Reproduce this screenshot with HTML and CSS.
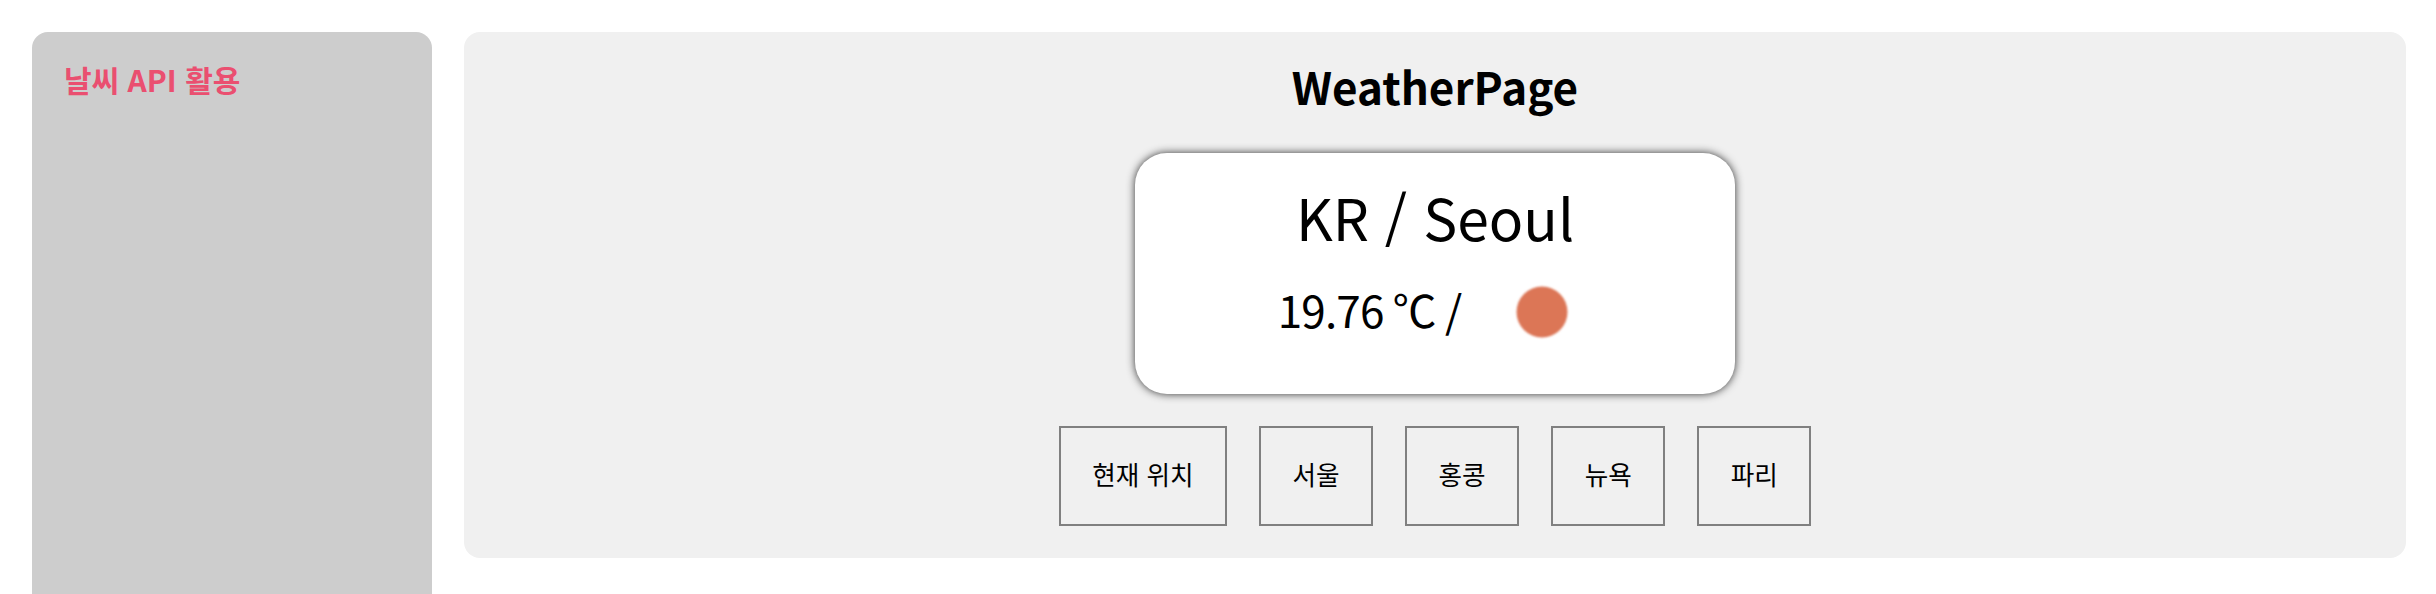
FILE: index.html
```html
<!DOCTYPE html>
<html lang="ko">

<head>
  <meta charset="utf-8">
  <title>WeatherPage</title>
  <link rel="stylesheet" href="styles.css">
</head>

<body>
  <div class="layout">
    <aside class="sidebar">
      <h3 class="sidebar-title">날씨 API 활용</h3>
    </aside>

    <main class="content">
      <h1 class="page-title">WeatherPage</h1>

      <section class="weather-card">
        <h2 class="city">KR / Seoul</h2>
        <div class="temp-row">
          <span class="temp">19.76 ℃ /</span>
          <svg class="weather-icon" viewBox="0 0 100 100" aria-label="weather icon">
            <defs>
              <filter id="soft"><feGaussianBlur stdDeviation="0.9"></feGaussianBlur></filter>
            </defs>
            <circle cx="50" cy="50" r="25.5" fill="#dc7656" filter="url(#soft)"></circle>
          </svg>
        </div>
      </section>

      <div class="city-buttons">
        <button class="city-button">현재 위치</button>
        <button class="city-button">서울</button>
        <button class="city-button">홍콩</button>
        <button class="city-button">뉴욕</button>
        <button class="city-button">파리</button>
      </div>
    </main>
  </div>
</body>

</html>
```

FILE: styles.css
```css
html,
body {
  height: 100%;
}

body {
  margin: 0;
  overflow: hidden;
  background: #fff;
  color: #000;
  font-family: "Noto Sans CJK KR", "Noto Sans", sans-serif;
}

.layout {
  display: flex;
  align-items: flex-start;
  gap: 32px;
  padding: 32px 30px 0 32px;
}

.sidebar {
  flex: 0 0 400px;
  box-sizing: border-box;
  height: 562px;
  padding: 30px 32px 0;
  border-radius: 16px 16px 0 0;
  background: #cdcdcd;
}

.sidebar-title {
  margin: 0;
  color: #ea4f70;
  font-size: 30px;
  line-height: 34px;
  font-weight: 700;
}

.content {
  flex: 1;
  box-sizing: border-box;
  height: 526px;
  padding-top: 26px;
  border-radius: 16px;
  background: #f0f0f0;
  display: flex;
  flex-direction: column;
  align-items: center;
}

.page-title {
  margin: 0 0 39px;
  font-size: 44px;
  line-height: 56px;
  font-weight: 700;
}

.weather-card {
  box-sizing: border-box;
  width: 600px;
  height: 241px;
  padding-top: 23px;
  border-radius: 32px;
  background: #fff;
  box-shadow: 0 0 8px #333;
  text-align: center;
}

.city {
  margin: 0 0 6px;
  font-size: 57px;
  line-height: 80px;
  font-weight: 400;
}

.temp-row {
  display: flex;
  justify-content: center;
  align-items: center;
  height: 100px;
}

.temp {
  margin-bottom: 6px;
  font-size: 44px;
  line-height: 60px;
  letter-spacing: -0.8px;
}

.weather-icon {
  width: 100px;
  height: 100px;
  margin-left: 31px;
}

.city-buttons {
  display: flex;
  gap: 32px;
  margin-top: 32px;
}

.city-button {
  box-sizing: border-box;
  height: 100px;
  padding: 0 31.5px 6px;
  border: 2px solid #808080;
  background: transparent;
  color: #000;
  font-family: inherit;
  font-size: 25.6px;
}
```
